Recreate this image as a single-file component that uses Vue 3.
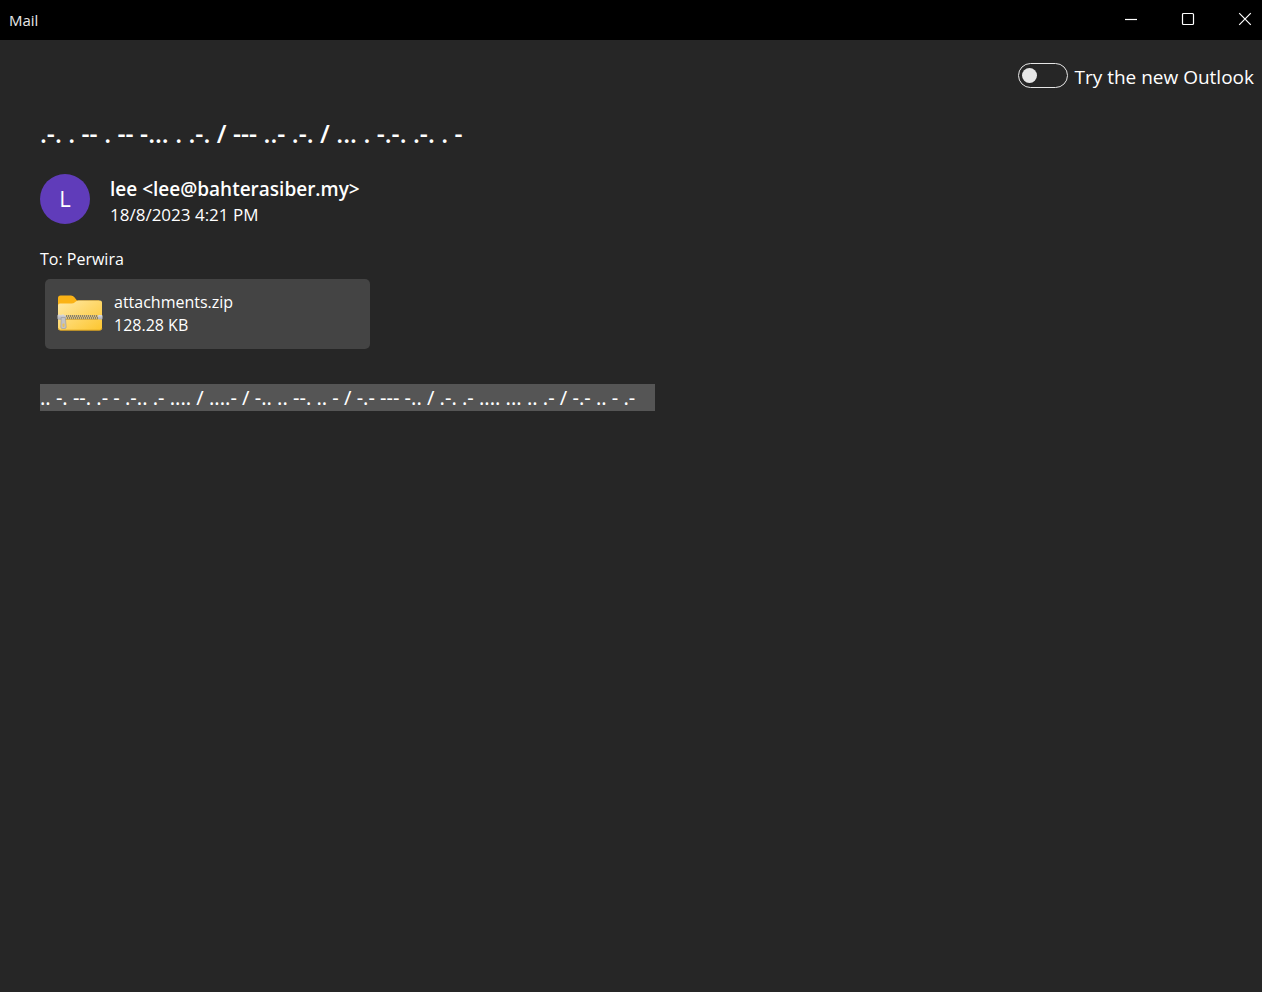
<script setup>
import { ref } from 'vue'

const newOutlook = ref(false)
const subject = '.-. . -- . -- -... . .-. / --- ..- .-. / ... . -.-. .-. . -'
const body = '.. -. --. .- - .-.. .- .... / ....- / -.. .. --. .. - / -.- --- -.. / .-. .- .... ... .. .- / -.- .. - .-'
</script>

<template>
  <div class="window">
    <header class="titlebar">
      <span class="app-name">Mail</span>
      <div class="controls">
        <button type="button" aria-label="Minimize">
          <svg width="14" height="14" viewBox="0 0 14 14"><path d="M1 7.5H13" /></svg>
        </button>
        <button type="button" aria-label="Maximize">
          <svg width="14" height="14" viewBox="0 0 14 14"><rect x="1.5" y="1.5" width="11" height="11" rx="1" /></svg>
        </button>
        <button type="button" aria-label="Close">
          <svg width="14" height="14" viewBox="0 0 14 14"><path d="M1.2 1.2L12.8 12.8M12.8 1.2L1.2 12.8" /></svg>
        </button>
      </div>
    </header>

    <div class="toolbar">
      <label class="switch">
        <input v-model="newOutlook" type="checkbox" role="switch" />
        <span>Try the new Outlook</span>
      </label>
    </div>

    <main class="message">
      <h1>{{ subject }}</h1>
      <div class="sender">
        <div class="avatar" aria-hidden="true">L</div>
        <div>
          <div class="from">lee &lt;lee@bahterasiber.my&gt;</div>
          <div class="date">18/8/2023 4:21 PM</div>
        </div>
      </div>
      <div class="to">To: Perwira</div>
      <button type="button" class="attachment">
        <svg class="folder" width="46" height="38" viewBox="0 0 46 38" aria-hidden="true">
          <defs>
            <linearGradient id="front" x1="0" y1="0" x2="1" y2="1">
              <stop offset="0" stop-color="#ffe9a6" />
              <stop offset="1" stop-color="#fdc62f" />
            </linearGradient>
            <linearGradient id="metal" x1="0" y1="0" x2="0" y2="1">
              <stop offset="0" stop-color="#dddde0" />
              <stop offset="1" stop-color="#aaaab0" />
            </linearGradient>
          </defs>
          <path d="M1 3Q1 0.5 3.5 0.5H14Q16 0.5 17.2 2L20 5.4H42V16H1Z" fill="#fbb316" />
          <path d="M1 10.5Q1 8.5 3 8.5H14.5Q16.5 8.5 18 7.2L19.2 6.2Q20.2 5.4 21.5 5.4H43Q45 5.4 45 7.4V33Q45 35.2 43 35.2H3Q1 35.2 1 33Z" fill="url(#front)" />
          <path d="M1.5 33.5Q2 35.2 3.5 35.2H42.5Q44.5 35.2 44.8 33.5" fill="none" stroke="#dba31f" stroke-width="1" />
          <path d="M8 24.5H41" stroke="#d9ad45" stroke-width="1" />
          <path d="M9 22H41" stroke="#d8bd7c" stroke-width="4" />
          <path d="M9 21H41M10 23H41" stroke="#8a8269" stroke-width="2" stroke-dasharray="1 1" />
          <rect x="41" y="20" width="4.5" height="4.5" rx="1" fill="url(#metal)" />
          <path d="M0.5 20.5Q0.5 19.5 2 19.5L4 20L6 19.3L9 21V23.5L7.5 24.8H1.5L0.5 23.8Z" fill="url(#metal)" />
          <path d="M4.2 22.5H8.3L9.2 32Q9.2 33.5 8 33.5H5Q3.8 33.5 3.8 32Z" fill="#c3c3c5" stroke="#8f8f94" stroke-width="0.5" />
          <rect x="5.5" y="28.5" width="2" height="3.5" rx="0.7" fill="#eabf55" />
        </svg>
        <span>
          <span class="line">attachments.zip</span>
          <span class="line">128.28 KB</span>
        </span>
      </button>
      <p><mark>{{ body }}</mark></p>
    </main>
  </div>
</template>

<style>
body {
  background: #262626;
}
</style>

<style scoped>
.window {
  min-height: 100vh;
  box-sizing: border-box;
  background: #262626;
  color: #fff;
  font-family: "Open Sans", "Noto Sans", sans-serif;
}
button {
  border: 0;
  color: inherit;
  font: inherit;
}
.titlebar {
  display: flex;
  align-items: center;
  justify-content: space-between;
  height: 40px;
  padding-left: 9px;
  background: #000;
}
.app-name {
  font-size: 15px;
  color: #e8e8e8;
}
.controls {
  display: flex;
  gap: 23px;
}
.controls button {
  display: flex;
  justify-content: center;
  width: 34px;
  padding: 0 0 2px;
  background: none;
}
.controls svg {
  fill: none;
  stroke: #fff;
  stroke-width: 1.2;
}
.toolbar {
  display: flex;
  justify-content: flex-end;
  padding: 23px 8px 0;
}
.switch {
  display: flex;
  align-items: flex-start;
  gap: 6px;
  font-size: 19px;
  line-height: 28px;
}
.switch input {
  appearance: none;
  display: flex;
  align-items: center;
  box-sizing: border-box;
  width: 50px;
  height: 25px;
  margin: 0;
  padding-left: 3px;
  border: 1px solid #e6e6e6;
  border-radius: 13px;
}
.switch input::before {
  content: "";
  width: 15px;
  height: 15px;
  border-radius: 50%;
  background: #e6e6e6;
}
.switch input:checked::before {
  margin-left: 26px;
}
.message {
  padding: 26px 40px;
}
h1 {
  margin: 0;
  font-size: 25px;
  font-weight: 600;
  line-height: 32px;
}
.sender {
  display: flex;
  align-items: flex-start;
  gap: 20px;
  margin-top: 25px;
}
.avatar {
  display: flex;
  align-items: center;
  justify-content: center;
  box-sizing: border-box;
  width: 50px;
  height: 50px;
  padding-bottom: 2px;
  border-radius: 50%;
  background: #603cba;
  font-size: 22px;
  line-height: 28px;
}
.from {
  font-size: 19px;
  font-weight: 600;
  line-height: 30px;
}
.date {
  font-size: 17px;
  line-height: 22px;
}
.to,
.attachment {
  font-size: 16px;
  line-height: 23px;
}
.to {
  margin-top: 22px;
}
.attachment {
  display: flex;
  align-items: center;
  gap: 11px;
  width: 325px;
  max-width: 100%;
  margin: 8px 5px 0;
  padding: 12px;
  border-radius: 5px;
  background: #444;
  text-align: left;
}
.line {
  display: block;
}
p {
  margin: 35px 0 0;
  font-family: "Noto Sans", "Open Sans", sans-serif;
  font-size: 20px;
  line-height: 27px;
}
mark {
  display: inline-block;
  padding-right: 20px;
  background: #555;
  color: #fff;
}
</style>
